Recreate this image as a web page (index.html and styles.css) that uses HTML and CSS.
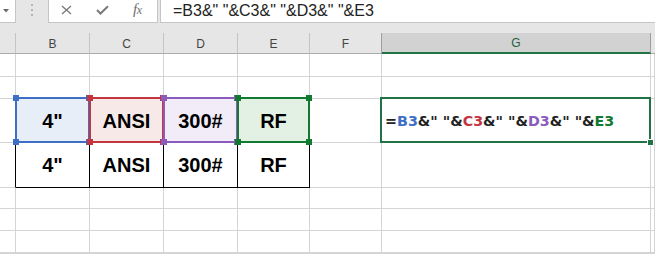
FILE: index.html
```html
<!DOCTYPE html>
<html>
<head>
<meta charset="utf-8">
<link rel="stylesheet" href="styles.css">
</head>
<body>
<div class="app">
  <div class="fbar">
    <div class="namebox">
      <svg class="tri" width="6" height="4" viewBox="0 0 6 4"><path d="M0 0 H6 L3 3.5 Z" fill="#6a6a6a"/></svg>
    </div>
    <div class="grip">
      <svg width="3" height="12" viewBox="0 0 3 12"><rect x="0" y="0" width="2" height="2" fill="#b4b4b4"/><rect x="0" y="5" width="2" height="2" fill="#b4b4b4"/><rect x="0" y="10" width="2" height="2" fill="#b4b4b4"/></svg>
    </div>
    <div class="btns">
      <svg class="ico-x" width="11" height="10" viewBox="0 0 11 10"><path d="M1 1 L10 9 M10 1 L1 9" stroke="#7a7a7a" stroke-width="1.4" fill="none"/></svg>
      <svg class="ico-ok" width="13" height="10" viewBox="0 0 13 10"><path d="M1 5 L4.5 8.5 L12 1.2" stroke="#7a7a7a" stroke-width="2" fill="none"/></svg>
      <span class="fx">f<span class="fx-x">x</span></span>
    </div>
    <div class="gap"></div>
    <div class="formula">=B3&amp;" "&amp;C3&amp;" "&amp;D3&amp;" "&amp;E3</div>
  </div>
  <div class="spacer"></div>
  <div class="sheet">
    <!-- header -->
    <div class="hd"></div>
    <div class="hd">B</div>
    <div class="hd">C</div>
    <div class="hd">D</div>
    <div class="hd">E</div>
    <div class="hd hd-f">F</div>
    <div class="hd hd-sel">G</div>
    <div class="hd hd-last"></div>
    <!-- row 1 -->
    <div class="c"></div><div class="c"></div><div class="c"></div><div class="c"></div><div class="c"></div><div class="c"></div><div class="c"></div><div class="c"></div>
    <!-- row 2 -->
    <div class="c"></div><div class="c"></div><div class="c"></div><div class="c"></div><div class="c"></div><div class="c"></div><div class="c"></div><div class="c"></div>
    <!-- row 3 -->
    <div class="c"></div>
    <div class="c val hl hl-blue">4"</div>
    <div class="c val hl hl-red">ANSI</div>
    <div class="c val hl hl-purple">300#</div>
    <div class="c val hl hl-green">RF</div>
    <div class="c"></div>
    <div class="c active"><span class="fml"><span>=</span><span class="r-b">B3</span>&amp;" "&amp;<span class="r-c">C3</span>&amp;" "&amp;<span class="r-d">D3</span>&amp;" "&amp;<span class="r-e">E3</span></span></div>
    <div class="c"></div>
    <!-- row 4 -->
    <div class="c bk-r"></div>
    <div class="c val bk">4"</div>
    <div class="c val bk">ANSI</div>
    <div class="c val bk">300#</div>
    <div class="c val bk">RF</div>
    <div class="c"></div><div class="c"></div><div class="c"></div>
    <!-- row 5 -->
    <div class="c"></div><div class="c"></div><div class="c"></div><div class="c"></div><div class="c"></div><div class="c"></div><div class="c"></div><div class="c"></div>
    <!-- row 6 -->
    <div class="c"></div><div class="c"></div><div class="c"></div><div class="c"></div><div class="c"></div><div class="c"></div><div class="c"></div><div class="c"></div>
    <!-- row 7 -->
    <div class="c"></div><div class="c"></div><div class="c"></div><div class="c"></div><div class="c"></div><div class="c"></div><div class="c"></div><div class="c"></div>
    <!-- row 8 -->
    <div class="c"></div><div class="c"></div><div class="c"></div><div class="c"></div><div class="c"></div><div class="c"></div><div class="c"></div><div class="c"></div>
  </div>
</div>
</body>
</html>
```
FILE: styles.css
```css
* { box-sizing: border-box; }
html, body { margin: 0; padding: 0; }
body {
  width: 655px;
  height: 254px;
  overflow: hidden;
  background: #e6e6e6;
  font-family: "Liberation Sans", Arial, sans-serif;
}
.app { display: flex; flex-direction: column; height: 254px; }

/* formula bar */
.fbar { display: flex; height: 23px; }
.namebox {
  width: 16px;
  background: #fff;
  border-right: 1px solid #c6c6c6;
  border-bottom: 1px solid #c6c6c6;
  display: flex;
  align-items: center;
  padding-left: 3px;
}
.tri { display: block; margin-top: -1px; }
.grip { width: 32px; display: flex; justify-content: center; padding-top: 4px; padding-left: 1px; }
.grip svg { display: block; }
.btns {
  width: 110px;
  background: #fff;
  border: 1px solid #c6c6c6;
  border-top: none;
  position: relative;
  display: flex;
  align-items: center;
}
.ico-x { margin-left: 12px; margin-top: -2px; }
.ico-ok { margin-left: 24px; margin-top: -3px; }
.fx {
  margin-left: 24px;
  margin-top: -3px;
  font-family: "Liberation Serif", "Times New Roman", serif;
  font-style: italic;
  font-size: 15px;
  color: #6e6e6e;
  letter-spacing: -0.5px;
}
.fx-x { font-size: 12px; }
.gap { width: 2px; }
.formula {
  flex: 1;
  background: #fff;
  border-left: 1px solid #c6c6c6;
  border-bottom: 1px solid #c6c6c6;
  padding-left: 12px;
  font-size: 16px;
  color: #222;
  line-height: 22px;
  white-space: nowrap;
}
.spacer { height: 10px; }

/* sheet */
.sheet {
  flex: 1;
  background: #fff;
  display: grid;
  grid-template-columns: 16px 74px 74px 74px 72px 72px 269px 1fr;
  grid-template-rows: 21px 23px 22px 44px 45px 21px 22px 22px 1fr;
}
.hd {
  background: #e6e6e6;
  border-right: 1px solid #c4c4c4;
  border-bottom: 1px solid #ababab;
  display: flex;
  align-items: center;
  justify-content: center;
  font-size: 12px;
  color: #444;
  padding-top: 1px;
}
.hd-f { border-right-color: #9e9e9e; }
.hd-sel {
  background: #d2d2d2;
  color: #1f5e3d;
  border-right-color: #9e9e9e;
  border-bottom: 2px solid #217346;
}
.hd-last { border-right: none; }
.c {
  border-right: 1px solid #d4d4d4;
  border-bottom: 1px solid #d4d4d4;
}
.val {
  display: flex;
  align-items: center;
  justify-content: center;
  font-weight: bold;
  font-size: 20px;
  color: #000;
  padding-top: 1px;
}
.bk { border-right-color: #000; border-bottom-color: #000; }
.bk-r { border-right-color: #000; }

/* reference highlight boxes */
.hl { position: relative; }
.hl::before {
  content: "";
  position: absolute;
  left: -1px; top: -2px; right: -1px; bottom: -1px;
  border: 2px solid var(--hc);
}
.hl::after {
  content: "";
  position: absolute;
  left: -3px; top: -4px; right: -3px; bottom: -3px;
  background:
    linear-gradient(var(--hc), var(--hc)) left top / 6px 6px no-repeat,
    linear-gradient(var(--hc), var(--hc)) right top / 6px 6px no-repeat,
    linear-gradient(var(--hc), var(--hc)) left bottom / 6px 6px no-repeat,
    linear-gradient(var(--hc), var(--hc)) right bottom / 6px 6px no-repeat;
}
.hl-blue { --hc: #3d6fc6; background: #e8eef8; }
.hl-red { --hc: #c4363f; background: #f8e9e9; }
.hl-purple { --hc: #8b5cbc; background: #f1ecf8; }
.hl-green { --hc: #117a30; background: #e3f1e4; }

/* active cell */
.active {
  position: relative;
  display: flex;
  align-items: center;
  padding-left: 3px;
}
.active::before {
  content: "";
  position: absolute;
  left: -2px; top: -2px; right: -1px; bottom: -1px;
  border: 2px solid #217346;
}
.active::after {
  content: "";
  position: absolute;
  right: -3px; bottom: -3px;
  width: 5px; height: 5px;
  background: #217346;
  outline: 1px solid #fff;
}
.fml {
  font-family: "DejaVu Sans", Verdana, sans-serif;
  font-weight: bold;
  font-size: 14.3px;
  color: #222;
  white-space: nowrap;
  padding-top: 1px;
}
.r-b { color: #3d6fc6; }
.r-c { color: #c4363f; }
.r-d { color: #8b5cbc; }
.r-e { color: #117a30; }
```
